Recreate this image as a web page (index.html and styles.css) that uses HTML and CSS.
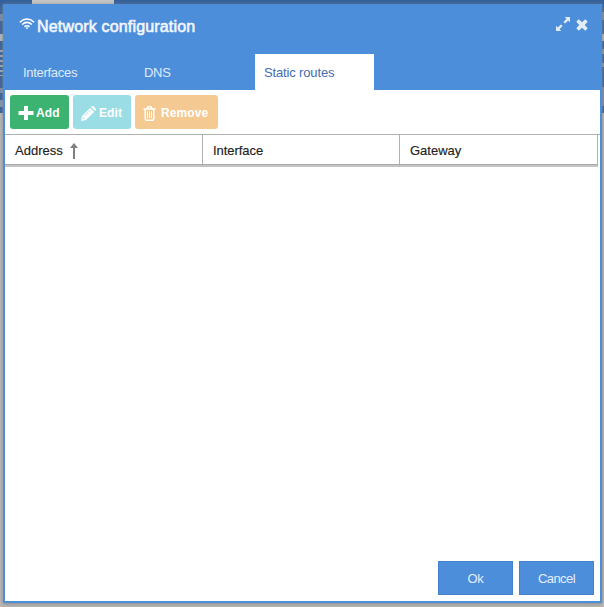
FILE: index.html
```html
<!DOCTYPE html>
<html lang="en">
<head>
<meta charset="utf-8">
<title>Network configuration</title>
<link rel="stylesheet" href="styles.css">
</head>
<body>
<div class="backdrop"><div class="backdrop-tab"></div></div>
<div class="backdrop-marks left"><i class="m1"></i><i class="m2"></i><i class="m3"></i><i class="m4"></i><i class="m5"></i></div>
<div class="backdrop-marks right"><i class="r1"></i><i class="r2"></i><i class="r3"></i><i class="r4"></i><i class="r5"></i></div>
<main class="window">
  <header class="titlebar">
    <svg class="wifi" width="16" height="12" viewBox="0 0 16 12" fill="none" stroke="#fff" stroke-width="1.5"><path d="M.8 4.2Q8-2.3 15.2 4.2M3.1 6.5Q8 2.2 12.9 6.5M5.4 8.7Q8 6.6 10.6 8.7"/><path d="M6.5 9.8Q8 8.8 9.5 9.8L8 11.3Z" fill="#fff" stroke="none"/></svg>
    <h1><span>Network configuration</span></h1>
    <div class="tools">
      <svg width="14" height="14" viewBox="0 0 14 14"><path d="M8.7 0H14V5.3L12.2 3.5 9.1 6.6 7.4 4.9 10.5 1.8ZM0 14V8.7L1.8 10.5 4.9 7.4 6.6 9.1 3.5 12.2 5.3 14Z"/></svg>
      <svg width="12" height="12" viewBox="0 0 12 12"><path d="M2.7.3 6 3.3 9.3.3 11.7 2.7 8.7 6 11.7 9.3 9.3 11.7 6 8.7 2.7 11.7.3 9.3 3.3 6 .3 2.7Z"/></svg>
    </div>
  </header>
  <nav class="tabs">
    <a class="tab t-if"><span>Interfaces</span></a><a class="tab t-dns"><span>DNS</span></a><a class="tab active"><span>Static routes</span></a>
  </nav>
  <section class="body">
    <div class="toolbar">
      <button class="btn add"><svg width="16" height="16" viewBox="0 0 16 16"><path d="M6 1h4v5h5.5v4H10v5H6v-5H.5V6H6Z"/></svg><span>Add</span></button>
      <button class="btn edit"><svg width="15" height="15" viewBox="0 0 15 15"><path d="M0 15 1 10 9.1 1.9 13.1 5.9 5 14ZM10 1 11 .2Q12-.3 13 .7L14.3 2Q15.3 3 14.7 4L14 5Z"/><path d="M1.8 11.2 3.8 13.2M3.6 9.8 9.5 3.9" stroke="#9bdde4" stroke-width=".9"/></svg><span>Edit</span></button>
      <button class="btn remove"><svg width="14" height="15" viewBox="0 0 14 15" fill="none" stroke="#fff"><path d="M.5 3h12M4 3 4.8.8h3.4L9 3M2.2 3v9.6Q2.3 14.2 3.5 14.2h6q1.2 0 1.3-1.6V3" stroke-width="1.5"/><path d="M4.5 5.2v7M6.5 5.2v7M8.5 5.2v7"/></svg><span>Remove</span></button>
    </div>
    <div class="grid-head">
      <div class="col"><span class="address">Address</span><svg width="8" height="16" viewBox="0 0 8 16"><path d="M4 0 8 5H5v11H3V5H0Z" fill="#808080"/></svg></div>
      <div class="col"><span class="interface">Interface</span></div>
      <div class="col"><span class="gateway">Gateway</span></div>
    </div>
    <div class="rows"></div>
    <footer class="actions"><button class="ok"><span>Ok</span></button><button class="cancel"><span>Cancel</span></button></footer>
  </section>
</main>
</body>
</html>
```
FILE: styles.css
```css
* { box-sizing: border-box; }
body { margin: 0; width: 604px; height: 607px; padding: 4px 2px 4px 3px; overflow: hidden; background: #b8b8b8; font-family: "Liberation Sans", Arial, sans-serif; font-size: 13px; }
.backdrop { position: absolute; left: 0; top: 0; width: 604px; height: 113px; background: #34619b; }
.backdrop-tab { width: 82px; height: 8px; margin-left: 32px; background: #c4c4c4; }
.backdrop-marks { position: absolute; top: 0; width: 3px; height: 113px; }
.left { left: 0; }
.right { left: 602px; width: 2px; }
.backdrop-marks i { position: absolute; left: 0; width: 100%; background: #b4bac2; }
.m1 { top: 14px; height: 7px; opacity: .5; }
.m2 { top: 34px; height: 7px; }
.backdrop-marks .m3 { top: 50px; height: 26px; background: repeating-linear-gradient(#9ba9bb 0 2px, #34619b 2px 5px); }
.m4 { top: 88px; height: 5px; opacity: .5; }
.m5 { top: 100px; height: 7px; opacity: .6; }
.r1 { top: 12px; height: 8px; opacity: .5; }
.r2 { top: 34px; height: 7px; }
.r3 { top: 49px; height: 5px; opacity: .6; }
.r4 { top: 63px; height: 4px; opacity: .6; }
.r5 { top: 87px; height: 19px; opacity: .5; }
.window { position: relative; display: flex; flex-direction: column; width: 599px; height: 599px; border: 2px solid #4d8edb; background: #4d8edb; box-shadow: 0 1px 4px #888; }
.titlebar { display: flex; height: 48px; padding: 0 12px 0 14px; }
.wifi { margin-top: 12px; }
h1 { margin: 11px 0 0 2px; color: #f2f6fc; font-size: 16px; line-height: 20px; font-weight: 400; -webkit-text-stroke: .6px #f2f6fc; letter-spacing: .17px; white-space: nowrap; }
.tools { display: flex; gap: 6px; margin: 11px 0 0 auto; fill: #e3edf9; }
.tools svg + svg { margin-top: 2px; }
.tabs { display: flex; height: 36px; color: #dfeafa; }
.tab { width: 119px; padding: 10px 9px; line-height: 17px; letter-spacing: -.3px; }
.t-if { width: 130px; padding-left: 18px; }
.t-dns { width: 120px; }
.tab.active { background: #fff; color: #456cac; letter-spacing: -.15px; }
.body { flex: 1; display: flex; flex-direction: column; background: #fff; }
.toolbar { display: flex; gap: 4px; height: 44px; padding: 5px; }
button { font: inherit; margin: 0; border: 0; }
.btn { display: flex; align-items: center; height: 34px; padding: 2px 0 0 8px; border-radius: 3px; color: #fff; font-size: 12px; font-weight: 700; letter-spacing: .1px; fill: #fff; white-space: nowrap; }
.btn span { margin-top: -1px; }
.add { width: 59px; gap: 2px; background: #3cb371; }
.edit { width: 58px; gap: 3px; background: #9bdde4; }
.remove { width: 83px; gap: 4px; background: #f4c992; }
.grid-head { display: grid; grid-template-columns: 198px 197px 198px; height: 33px; border-top: 1px solid #b0b0b0; color: #222; }
.col { display: flex; gap: 7px; height: 32px; padding: 8px 0 0 10px; line-height: 16px; border-right: 1px solid #b0b0b0; border-bottom: 2px solid #c5c5c5; box-shadow: inset 0 -1px #aaa; -webkit-text-stroke: .15px #222; }
.interface { letter-spacing: -.05px; }
.rows { flex: 1; }
.actions { display: flex; justify-content: flex-end; gap: 6px; padding: 0 6px 6px; }
.actions button { width: 75px; height: 34px; padding: 1px 0 0; border: 1px solid #4482cf; background: #4d8edb; color: #e3edfb; }
.ok { letter-spacing: -.4px; }
.cancel { letter-spacing: -.6px; }
```
